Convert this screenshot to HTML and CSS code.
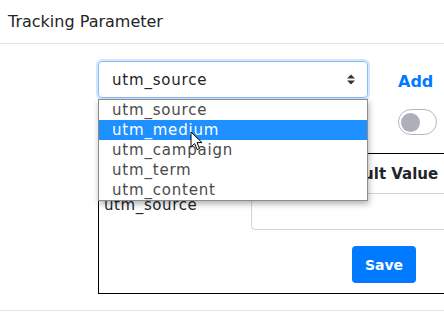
FILE: index.html
```html
<!DOCTYPE html>
<html lang="en">
<head>
    <meta charset="UTF-8">
    <title>Tracking Parameter</title>
    <link rel="stylesheet" href="styles.css">
</head>
<body>
    <div class="card">
        <div class="card-header">Tracking Parameter</div>
        <div class="card-body">
            <div class="param-grid">
                <div class="select-wrap">
                    <div class="select">
                        <span>utm_source</span>
                        <svg class="select-arrows" width="8" height="11" viewBox="0 0 8 11">
                            <path d="M0 4.5 L4 0.5 L8 4.5 Z" fill="#333"/>
                            <path d="M0 6.5 L4 10.5 L8 6.5 Z" fill="#333"/>
                        </svg>
                    </div>
                    <ul class="options">
                        <li>utm_source</li>
                        <li class="active">utm_medium</li>
                        <li>utm_campaign</li>
                        <li>utm_term</li>
                        <li>utm_content</li>
                    </ul>
                    <!-- pointeur de la souris -->
                    <svg class="cursor" width="13" height="20" viewBox="0 0 13 20">
                        <path d="M1 1 L1 16 L4.6 12.6 L7.2 18.6 L9.6 17.6 L7 11.6 L12 11.6 Z" fill="#fff" stroke="#000" stroke-width="1" stroke-linejoin="round"/>
                    </svg>
                </div>
                <a href="#" class="add-link">Add</a>
                <div></div>
                <span class="switch"><span class="knob"></span></span>
            </div>

            <div class="param-table">
                <div class="th">Parameter</div>
                <div class="th">Default Value</div>
                <div class="td name">utm_source</div>
                <div class="td value">
                    <div class="text-input"></div>
                    <button class="btn-save">Save</button>
                </div>
            </div>
        </div>
    </div>
</body>
</html>
```

FILE: styles.css
```css
* {
    box-sizing: border-box;
}

body {
    margin: 0;
    font-family: 'DejaVu Sans', sans-serif;
    color: #212529;
    background: #fff;
    width: 444px;
    height: 330px;
    overflow: hidden;
}

.card-header {
    height: 44px;
    padding-left: 8px;
    display: flex;
    align-items: center;
    font-size: 16px;
    border-bottom: 1px solid #e2e2e2;
}

.card-body {
    padding: 17px 0 16px 98px;
    border-bottom: 1px solid #e2e2e2;
}

.param-grid {
    display: grid;
    grid-template-columns: 270px auto;
    column-gap: 30px;
    row-gap: 11px;
    align-items: center;
    justify-items: start;
}

.select-wrap {
    position: relative;
    z-index: 2;
}

.select {
    width: 270px;
    height: 37px;
    padding: 0 12px 0 13px;
    display: flex;
    align-items: center;
    justify-content: space-between;
    font-size: 15px;
    letter-spacing: 0.8px;
    border: 1px solid #86bdf5;
    border-radius: 4px;
    box-shadow: 0 0 0 2px rgba(0, 123, 255, 0.18);
}

.options {
    position: absolute;
    top: 38px;
    left: 0;
    width: 270px;
    margin: 0;
    padding: 0;
    list-style: none;
    background: #fff;
    border: 1px solid #8c8c8c;
    box-shadow: 1px 3px 6px rgba(0, 0, 0, 0.3);
}

.options li {
    height: 20px;
    line-height: 20px;
    padding-left: 13px;
    font-size: 15px;
    letter-spacing: 0.8px;
    color: #4a4a4a;
}

.options li.active {
    background: #1e90ff;
    color: #fff;
}

.cursor {
    position: absolute;
    left: 92px;
    top: 70px;
}

.add-link {
    color: #007bff;
    font-weight: bold;
    font-size: 16px;
    text-decoration: none;
    margin-top: 4px;
}

.switch {
    width: 39px;
    height: 26px;
    border: 1.5px solid #b4b8bd;
    border-radius: 13px;
    display: flex;
    align-items: center;
    padding-left: 2px;
}

.knob {
    width: 19px;
    height: 19px;
    border-radius: 50%;
    background: #adb0b8;
}

.param-table {
    margin-top: 18px;
    width: 420px;
    border: 1px solid #000;
    display: grid;
    grid-template-columns: 146px 1fr;
}

.th {
    height: 39px;
    display: flex;
    align-items: center;
    justify-content: center;
    font-weight: bold;
    font-size: 15px;
}

.td.name {
    padding: 3px 0 0 5px;
    font-size: 15px;
    letter-spacing: 0.6px;
}

.td.value {
    padding: 0 0 10px 6px;
    display: flex;
    flex-direction: column;
    align-items: center;
}

.text-input {
    align-self: stretch;
    height: 37px;
    border: 1px solid #ced4da;
    border-radius: 4px;
}

.btn-save {
    margin-top: 16px;
    width: 64px;
    height: 37px;
    border: none;
    border-radius: 4px;
    background: #007bff;
    color: #fff;
    font-family: inherit;
    font-weight: bold;
    font-size: 14px;
}
```
